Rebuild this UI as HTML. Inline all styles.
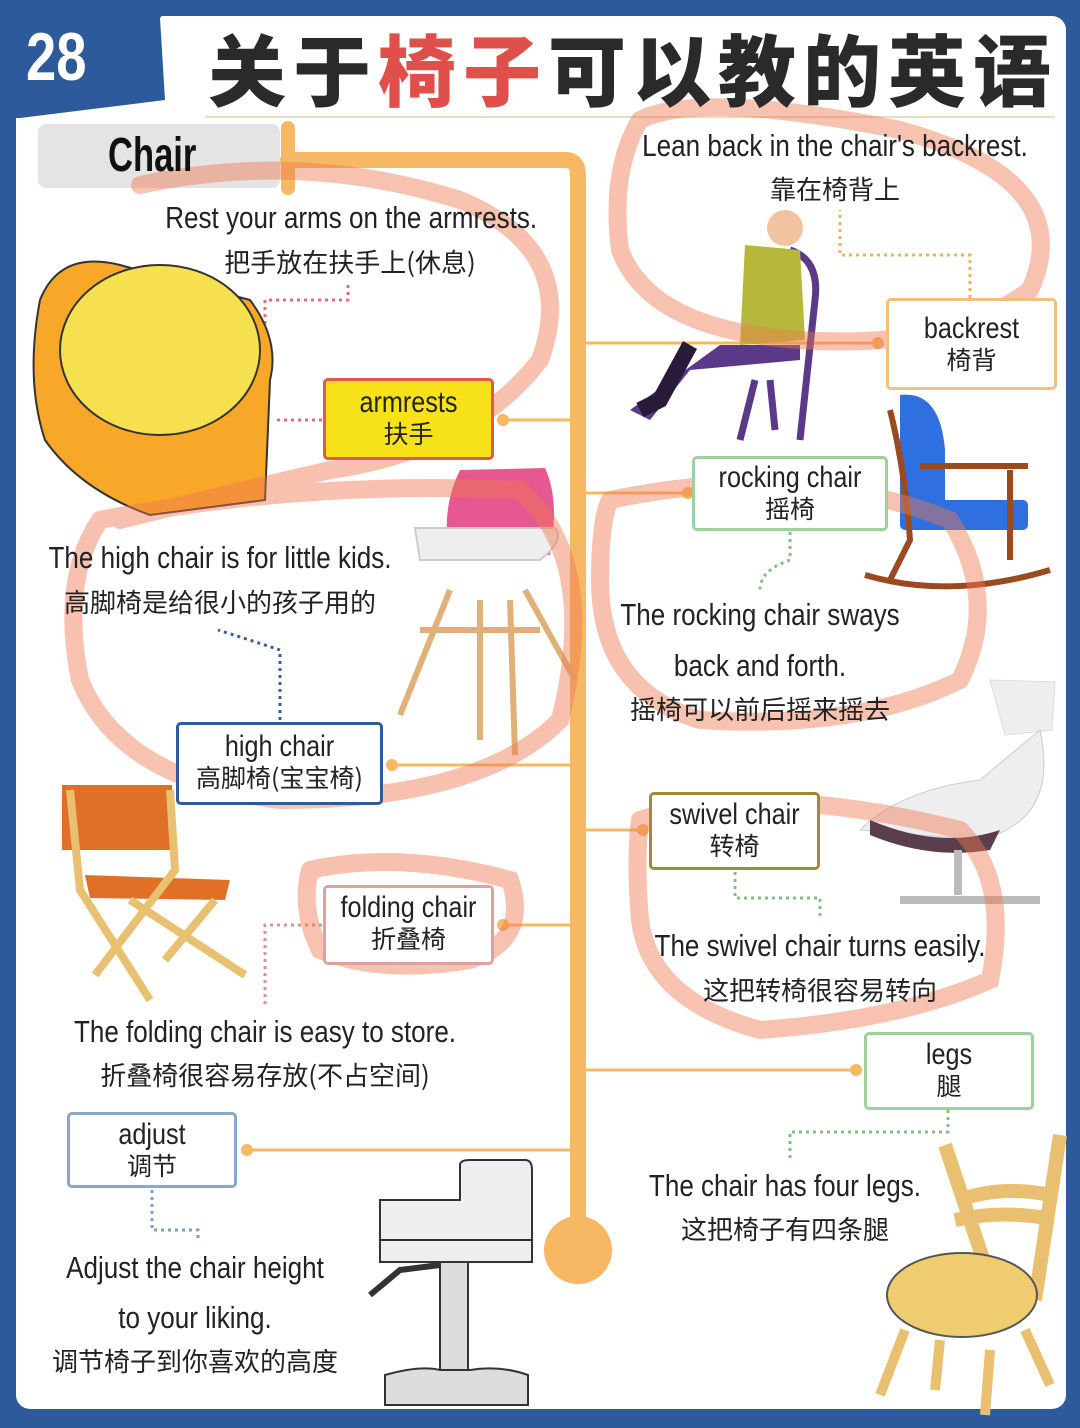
<!DOCTYPE html>
<html><head><meta charset="utf-8">
<style>
*{margin:0;padding:0;box-sizing:border-box}
body{width:1080px;height:1428px;background:#2d5a9b;position:relative;overflow:hidden;font-family:"Liberation Sans Narrow","Liberation Sans","Noto Sans CJK SC",sans-serif;color:#222}
#card{position:absolute;left:16px;top:16px;width:1050px;height:1393px;background:#fff;border-radius:14px}
.a{position:absolute}
.t{position:absolute;text-align:center;white-space:nowrap;font-size:31px;line-height:36px;color:#222;transform:scaleX(.84);transform-origin:center}
.c{font-family:"Noto Sans CJK SC",sans-serif;font-size:26px;line-height:34px;transform:none}
.box{position:absolute;border:3px solid;border-radius:5px;background:#fff;text-align:center;font-size:30px;line-height:31px;padding-top:6px}
.box span{display:block;transform:scaleX(.84);white-space:nowrap}
.box .z{font-family:"Noto Sans CJK SC",sans-serif;font-size:25px;transform:none}
</style></head><body>
<div id="card"></div>
<svg class="a" style="left:0;top:0" width="1080" height="1428">
<polygon points="0,0 175,0 160,18 165,100 20,118 0,118" fill="#2d5a9b"/>
<line x1="205" y1="117" x2="1055" y2="117" stroke="#e8dcc0" stroke-width="2"/>
<rect x="38" y="124" width="242" height="64" rx="8" fill="#e4e4e4"/>
<g stroke="#f6b862" fill="none" stroke-linecap="round">
<line x1="288" y1="128" x2="288" y2="188" stroke-width="14"/>
<path d="M288 160 H565 Q578 160 578 175 V1240" stroke-width="16"/>
<g stroke-width="3">
<line x1="500" y1="420" x2="578" y2="420"/><line x1="578" y1="343" x2="880" y2="343"/>
<line x1="578" y1="493" x2="690" y2="493"/><line x1="390" y1="765" x2="578" y2="765"/>
<line x1="578" y1="830" x2="645" y2="830"/><line x1="500" y1="925" x2="578" y2="925"/>
<line x1="578" y1="1070" x2="858" y2="1070"/><line x1="245" y1="1150" x2="578" y2="1150"/>
</g></g>
<g fill="#f6b862"><circle cx="578" cy="1250" r="34"/><circle cx="503" cy="420" r="6"/><circle cx="878" cy="343" r="6"/><circle cx="688" cy="493" r="6"/><circle cx="392" cy="765" r="6"/><circle cx="643" cy="830" r="6"/><circle cx="503" cy="925" r="6"/><circle cx="856" cy="1070" r="6"/><circle cx="247" cy="1150" r="6"/></g>
<g fill="none" stroke-width="3" stroke-dasharray="3,4">
<path d="M322 420 H275" stroke="#e07070"/><path d="M265 380 V300 H348 V285" stroke="#e07070"/>
<path d="M970 298 V255 H840 V210" stroke="#f0b060"/>
<path d="M790 532 V560 Q760 570 760 590" stroke="#80c080"/>
<path d="M280 720 V650 Q250 640 218 630" stroke="#3a5f9a"/>
<path d="M735 872 V898 H820 V920" stroke="#80c080"/>
<path d="M322 925 H265 V1005" stroke="#e09090"/>
<path d="M948 1110 V1132 H790 V1160" stroke="#80c080"/>
<path d="M152 1190 V1230 H198 V1240" stroke="#7aa0c8"/>
</g>
<!-- armchair -->
<path d="M40 300 Q60 250 120 265 L250 300 Q280 340 270 380 L265 500 L150 515 Q80 490 45 440 Q25 380 40 300Z" fill="#f8a828" stroke="#333" stroke-width="2"/>
<ellipse cx="160" cy="350" rx="100" ry="85" fill="#f6e050" stroke="#333" stroke-width="2"/>
<!-- person chair -->
<path d="M790 250 Q820 260 815 300 L800 440 M755 380 L740 440 M770 380 L775 430" stroke="#5a3a88" stroke-width="7" fill="none"/>
<path d="M745 245 L800 250 L805 340 L740 345Z" fill="#b5b83a"/>
<circle cx="785" cy="228" r="18" fill="#f3c3a0"/>
<path d="M720 345 L800 345 L800 360 L690 370 L650 420 L630 410Z" fill="#5a3a88"/>
<path d="M690 345 L660 400 L640 410" stroke="#2a1a3a" stroke-width="16" fill="none"/>
<!-- rocking chair -->
<path d="M900 395 Q940 390 945 450 L945 505 L900 505Z" fill="#2f6fe0"/>
<rect x="900" y="500" width="128" height="30" rx="5" fill="#2f6fe0"/>
<path d="M890 410 Q905 470 910 540 L890 580 M920 466 H1028 M1010 470 V560 M865 575 Q950 600 1050 570" stroke="#9a4a20" stroke-width="6" fill="none"/>
<!-- high chair -->
<path d="M460 470 L545 468 Q560 500 550 555 L450 560 Q440 510 460 470Z" fill="#e85890"/>
<path d="M415 528 L555 528 Q565 540 540 560 L420 560Z" fill="#eee" stroke="#ccc" stroke-width="2"/>
<path d="M450 590 L400 715 M525 590 L575 680 M480 600 L480 740 M510 600 L515 755 M420 630 L540 630" stroke="#e0b078" stroke-width="6"/>
<!-- swivel chair -->
<path d="M990 680 L1055 682 L1052 730 L1005 735Z" fill="#eee" stroke="#ddd"/>
<path d="M1040 730 Q1060 820 980 840 L860 830 Q900 790 980 780Z" fill="#eee" stroke="#ccc"/>
<path d="M870 820 Q940 850 1000 830 L990 850 Q930 860 870 835Z" fill="#5a3e4e"/>
<path d="M958 850 V895 M900 900 L1040 900" stroke="#bbb" stroke-width="8"/>
<!-- folding chair -->
<rect x="62" y="785" width="110" height="65" fill="#e07028"/>
<path d="M85 875 L230 880 L225 900 L90 898Z" fill="#e07028"/>
<path d="M70 790 L80 890 L150 1000 M170 790 L175 870 L95 975 M130 900 L245 975 M215 900 L165 960" stroke="#e8c070" stroke-width="8" fill="none"/>
<!-- stool -->
<path d="M380 1200 H460 V1165 Q460 1160 470 1160 H525 Q532 1160 532 1170 V1240 H380Z" fill="#eee" stroke="#333" stroke-width="2"/>
<rect x="380" y="1240" width="152" height="22" fill="#eee" stroke="#333" stroke-width="2"/>
<rect x="440" y="1262" width="28" height="115" fill="#ddd" stroke="#333" stroke-width="2"/>
<path d="M385 1375 Q420 1365 440 1370 H470 Q500 1365 528 1375 V1405 H385Z" fill="#ddd" stroke="#333" stroke-width="2"/>
<path d="M440 1265 L400 1270 L370 1295" stroke="#333" stroke-width="6" fill="none"/>
<!-- wooden chair -->
<path d="M945 1145 L985 1265 M1060 1135 L1035 1300 M960 1200 Q1000 1185 1050 1195 M955 1220 Q1000 1210 1045 1218" stroke="#e8c070" stroke-width="14" fill="none"/>
<path d="M905 1330 L880 1395 M940 1340 L935 1390 M990 1350 L985 1415 M1025 1330 L1050 1385" stroke="#e8c070" stroke-width="10"/>
<ellipse cx="962" cy="1295" rx="75" ry="42" fill="#f0cc70" stroke="#555" stroke-width="2"/>
<!-- red scribbles -->
<g fill="none" stroke="#f07850" stroke-width="18" opacity=".45" stroke-linecap="round">
<path d="M140 185 Q300 150 460 200 Q580 250 540 360 Q470 450 330 470 Q200 500 120 520"/>
<path d="M640 120 Q700 90 900 130 Q1080 180 1030 290 Q950 350 800 340 Q650 330 620 250 Q610 170 640 120"/>
<path d="M100 520 Q300 480 520 490 Q600 560 560 720 Q480 800 280 800 Q120 780 80 680 Q60 580 100 520"/>
<path d="M610 500 Q800 460 950 520 Q1000 600 960 680 Q860 730 700 720 Q600 690 600 580 Q600 520 610 500"/>
<path d="M640 820 Q760 780 960 830 Q1010 880 990 980 Q900 1020 760 1030 Q650 1000 640 920 Q635 860 640 820"/>
<path d="M310 870 Q400 850 510 880 Q530 940 470 960 Q380 975 320 950 Q300 910 310 870"/>
</g>
</svg>
<div class="a" style="left:26px;top:18px;font-size:68px;font-weight:bold;color:#fff;font-family:'Liberation Sans Narrow','Liberation Sans',sans-serif;transform:scaleX(.8);transform-origin:left">28</div>
<div class="a" style="left:208px;top:22px;font-size:78px;font-weight:900;font-family:'Noto Sans CJK SC',sans-serif;line-height:90px;color:#2a2a2a;letter-spacing:7px;white-space:nowrap">关于<span style="color:#e0504a">椅子</span>可以教的英语</div>
<div class="a" style="left:108px;top:128px;font-size:48px;font-weight:bold;color:#111;transform:scaleX(.72);transform-origin:left">Chair</div>

<div class="t" style="left:130px;top:200px;width:440px">Rest your arms on the armrests.</div>
<div class="t c" style="left:130px;top:245px;width:440px">把手放在扶手上(休息)</div>
<div class="t" style="left:600px;top:128px;width:470px">Lean back in the chair's backrest.</div>
<div class="t c" style="left:600px;top:172px;width:470px">靠在椅背上</div>
<div class="t" style="left:0;top:540px;width:440px">The high chair is for little kids.</div>
<div class="t c" style="left:0;top:585px;width:440px">高脚椅是给很小的孩子用的</div>
<div class="t" style="left:560px;top:597px;width:400px">The rocking chair sways</div>
<div class="t" style="left:560px;top:648px;width:400px">back and forth.</div>
<div class="t c" style="left:560px;top:692px;width:400px">摇椅可以前后摇来摇去</div>
<div class="t" style="left:600px;top:928px;width:440px">The swivel chair turns easily.</div>
<div class="t c" style="left:600px;top:973px;width:440px">这把转椅很容易转向</div>
<div class="t" style="left:30px;top:1014px;width:470px">The folding chair is easy to store.</div>
<div class="t c" style="left:30px;top:1058px;width:470px">折叠椅很容易存放(不占空间)</div>
<div class="t" style="left:590px;top:1168px;width:390px">The chair has four legs.</div>
<div class="t c" style="left:590px;top:1212px;width:390px">这把椅子有四条腿</div>
<div class="t" style="left:0;top:1250px;width:390px">Adjust the chair height</div>
<div class="t" style="left:0;top:1300px;width:390px">to your liking.</div>
<div class="t c" style="left:0;top:1344px;width:390px">调节椅子到你喜欢的高度</div>

<div class="box" style="left:323px;top:378px;width:171px;height:82px;border-color:#e05a4a;background:#f7e21a"><span>armrests</span><span class="z">扶手</span></div>
<div class="box" style="left:886px;top:298px;width:171px;height:92px;border-color:#f0c080;padding-top:12px"><span>backrest</span><span class="z">椅背</span></div>
<div class="box" style="left:692px;top:456px;width:196px;height:75px;border-color:#9cd39c;padding-top:3px"><span>rocking chair</span><span class="z">摇椅</span></div>
<div class="box" style="left:176px;top:722px;width:207px;height:83px;border-color:#2e5b9a"><span>high chair</span><span class="z">高脚椅(宝宝椅)</span></div>
<div class="box" style="left:649px;top:792px;width:171px;height:78px;border-color:#a08a3a;padding-top:4px"><span>swivel chair</span><span class="z">转椅</span></div>
<div class="box" style="left:323px;top:885px;width:171px;height:80px;border-color:#e0a0a0;padding-top:4px"><span>folding chair</span><span class="z">折叠椅</span></div>
<div class="box" style="left:864px;top:1032px;width:170px;height:78px;border-color:#9cd39c;padding-top:4px"><span>legs</span><span class="z">腿</span></div>
<div class="box" style="left:67px;top:1112px;width:170px;height:76px;border-color:#8aa8c8;padding-top:4px"><span>adjust</span><span class="z">调节</span></div>
</body></html>
